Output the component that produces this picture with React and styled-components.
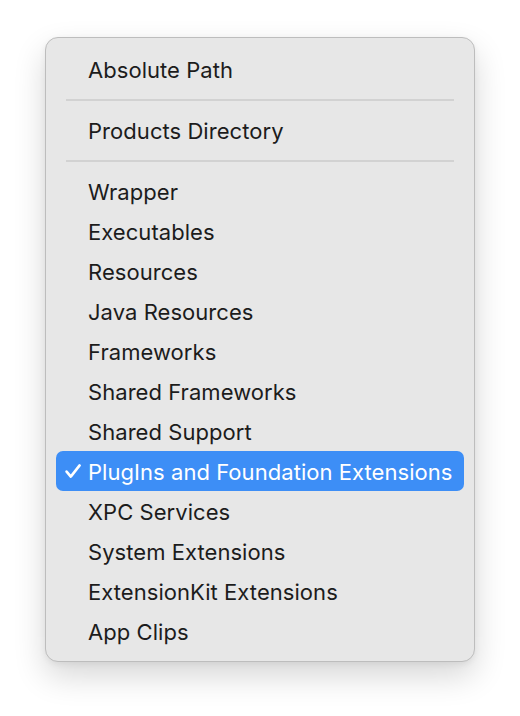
import React from "react";
import styled, { createGlobalStyle } from "styled-components";

const Global = createGlobalStyle`
  html, body { margin: 0; padding: 0; background: #ffffff; }
  body { width: 520px; height: 716px; overflow: hidden; font-family: Inter, "Noto Sans", sans-serif; }
`;

const Page = styled.div`
  width: 520px;
  height: 716px;
  padding: 37px 45px 0 45px;
  box-sizing: border-box;
`;

const Menu = styled.div`
  width: 430px;
  box-sizing: border-box;
  background: #e7e7e7;
  border: 1px solid #bdbdbd;
  border-radius: 13px;
  padding: 11px 10px 10px 10px;
  display: flex;
  flex-direction: column;
  box-shadow: 0 14px 32px rgba(0, 0, 0, 0.16), 0 2px 6px rgba(0, 0, 0, 0.06);
`;

const Item = styled.div`
  height: 40px;
  box-sizing: border-box;
  padding-top: 2px;
  display: flex;
  align-items: center;
  border-radius: 7px;
  padding-left: 32px;
  position: relative;
  font-size: 22px;
  font-weight: 400;
  letter-spacing: 0.05px;
  color: ${(p) => (p.$active ? "#ffffff" : "#1c1c1c")};
  background: ${(p) => (p.$active ? "#3d8ef6" : "transparent")};
`;

const Check = styled.svg`
  position: absolute;
  left: 9px;
  top: 12px;
  width: 16px;
  height: 16px;
`;

const Separator = styled.div`
  height: 21px;
  display: flex;
  align-items: center;
  padding: 0 10px;
  &::after {
    content: "";
    flex: 1;
    height: 2px;
    background: #d2d2d2;
  }
`;

const groups = [
  ["Absolute Path"],
  ["Products Directory"],
  [
    "Wrapper",
    "Executables",
    "Resources",
    "Java Resources",
    "Frameworks",
    "Shared Frameworks",
    "Shared Support",
    "PlugIns and Foundation Extensions",
    "XPC Services",
    "System Extensions",
    "ExtensionKit Extensions",
    "App Clips",
  ],
];

const ACTIVE = "PlugIns and Foundation Extensions";

export default function App() {
  return (
    <>
      <Global />
      <Page>
        <Menu>
          {groups.map((g, gi) => (
            <React.Fragment key={gi}>
              {gi > 0 && <Separator />}
              {g.map((label) => (
                <Item key={label} $active={label === ACTIVE}>
                  {label === ACTIVE && (
                    <Check viewBox="0 0 16 16">
                      <path
                        d="M1.6 8.6 L5.8 13.6 L14.6 2.4"
                        fill="none"
                        stroke="#ffffff"
                        strokeWidth="2.6"
                        strokeLinecap="round"
                        strokeLinejoin="round"
                      />
                    </Check>
                  )}
                  {label}
                </Item>
              ))}
            </React.Fragment>
          ))}
        </Menu>
      </Page>
    </>
  );
}
